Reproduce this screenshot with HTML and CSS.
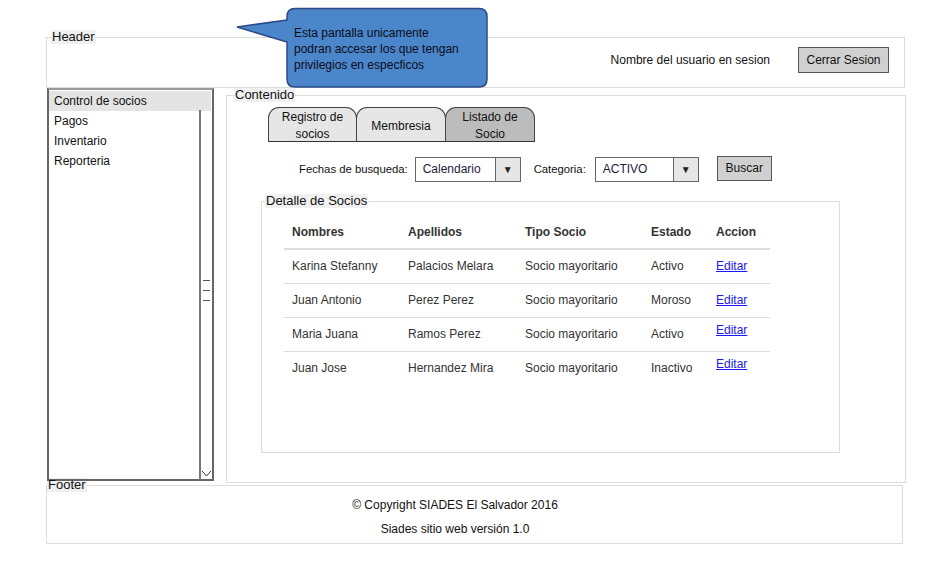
FILE: index.html
```html
<!DOCTYPE html>
<html lang="es">
<head>
    <meta charset="UTF-8">
    <title>SIADES - Listado de Socios</title>
    <link rel="stylesheet" href="styles.css">
</head>
<body>
    <div class="page">
        <fieldset class="box header">
            <legend>Header</legend>
            <div class="header-bar">
                <span class="user-name">Nombre del usuario en sesion</span>
                <button class="btn btn-logout">Cerrar Sesion</button>
            </div>
        </fieldset>

        <div class="main">
            <div class="sidebar">
                <ul class="menu">
                    <li class="active">Control de socios</li>
                    <li>Pagos</li>
                    <li>Inventario</li>
                    <li>Reporteria</li>
                </ul>
                <div class="scrollbar">
                    <svg class="grip" width="9" height="22" viewBox="0 0 9 22">
                        <path d="M1 1.5H8M1 11.5H8M1 21.5H8" stroke="#555" stroke-width="1"/>
                    </svg>
                    <svg class="chevron" width="11" height="7" viewBox="0 0 11 7">
                        <path d="M1 1L5.5 6L10 1" fill="none" stroke="#333" stroke-width="1"/>
                    </svg>
                </div>
            </div>

            <fieldset class="box content">
                <legend>Contenido</legend>
                <div class="tabs">
                    <div class="tab">Registro de<br>socios</div>
                    <div class="tab">Membresia</div>
                    <div class="tab selected">Listado de<br>Socio</div>
                </div>

                <div class="filters">
                    <span class="filter-label">Fechas de busqueda:</span>
                    <div class="select select-date">
                        <span class="select-value">Calendario</span>
                        <span class="select-arrow">&#9660;</span>
                    </div>
                    <span class="filter-label label-cat">Categoria:</span>
                    <div class="select select-cat">
                        <span class="select-value">ACTIVO</span>
                        <span class="select-arrow">&#9660;</span>
                    </div>
                    <button class="btn btn-search">Buscar</button>
                </div>

                <fieldset class="box detail">
                    <legend>Detalle de Socios</legend>
                    <table class="members">
                        <colgroup>
                            <col style="width:116px">
                            <col style="width:117px">
                            <col style="width:126px">
                            <col style="width:65px">
                            <col style="width:62px">
                        </colgroup>
                        <thead>
                            <tr>
                                <th>Nombres</th>
                                <th>Apellidos</th>
                                <th>Tipo Socio</th>
                                <th>Estado</th>
                                <th>Accion</th>
                            </tr>
                        </thead>
                        <tbody>
                            <tr>
                                <td>Karina Stefanny</td>
                                <td>Palacios Melara</td>
                                <td>Socio mayoritario</td>
                                <td>Activo</td>
                                <td><a href="#" class="edit">Editar</a></td>
                            </tr>
                            <tr>
                                <td>Juan Antonio</td>
                                <td>Perez Perez</td>
                                <td>Socio mayoritario</td>
                                <td>Moroso</td>
                                <td><a href="#" class="edit">Editar</a></td>
                            </tr>
                            <tr>
                                <td>Maria Juana</td>
                                <td>Ramos Perez</td>
                                <td>Socio mayoritario</td>
                                <td>Activo</td>
                                <td class="edit-cell"><a href="#" class="edit">Editar</a></td>
                            </tr>
                            <tr>
                                <td>Juan Jose</td>
                                <td>Hernandez Mira</td>
                                <td>Socio mayoritario</td>
                                <td>Inactivo</td>
                                <td class="edit-cell"><a href="#" class="edit">Editar</a></td>
                            </tr>
                        </tbody>
                    </table>
                </fieldset>
            </fieldset>
        </div>

        <fieldset class="box footer">
            <legend>Footer</legend>
            <div class="footer-text">
                <p>&copy; Copyright SIADES El Salvador 2016</p>
                <p>Siades sitio web versión 1.0</p>
            </div>
        </fieldset>

        <!-- nota del wireframe -->
        <div class="callout">
            <svg class="callout-shape" width="253" height="82" viewBox="0 0 253 82">
                <path d="M59 1.5H243Q251 1.5 251 9.5V72Q251 80 243 80H59Q51 80 51 72V35L1 20L51 13V9.5Q51 1.5 59 1.5Z"
                      fill="#4a86c9" stroke="#2c4a86" stroke-width="1.5"/>
            </svg>
            <p class="callout-text">Esta pantalla unicamente<br>podran accesar los que tengan<br>privilegios en especficos</p>
        </div>
    </div>
</body>
</html>
```

FILE: styles.css
```css
* {
    box-sizing: border-box;
}
body {
    margin: 0;
    font-family: 'Liberation Sans', Arial, sans-serif;
    font-size: 12px;
    color: #222;
    background: #fff;
}
.page {
    position: relative;
    width: 949px;
    height: 575px;
    padding-top: 30px;
}
.box {
    margin: 0;
    padding: 0;
    min-width: 0;
    border: 1px solid #dcdcdc;
}
.box legend {
    padding: 0 1px;
    margin-left: 4px;
    background: #f0f0f0;
    font-size: 13px;
    line-height: 14px;
    color: #111;
}
.header {
    margin-left: 46px;
    width: 859px;
}
.header-bar {
    display: flex;
    justify-content: flex-end;
    align-items: center;
    gap: 28px;
    padding: 3px 15px 14px 0;
}
.user-name {
    color: #111;
}
.btn {
    font-family: inherit;
    font-size: 12px;
    color: #111;
    background: #d0d0d0;
    border: 1px solid #555;
    border-radius: 0;
    padding: 0;
    cursor: pointer;
}
.btn-logout {
    width: 91px;
    height: 26px;
}
.main {
    display: flex;
    align-items: flex-start;
    margin-left: 47px;
    height: 395px;
}
.sidebar {
    display: flex;
    width: 167px;
    height: 393px;
    border: 2px solid #666;
    border-top-color: #999;
}
.menu {
    flex: 1;
    list-style: none;
    margin: 0;
    padding: 1px 0 0;
}
.menu li {
    height: 20px;
    line-height: 20px;
    padding-left: 5px;
    color: #111;
}
.menu li.active {
    background: #e4e4e4;
    margin-right: -12px;
}
.scrollbar {
    display: flex;
    flex-direction: column;
    align-items: center;
    width: 13px;
    margin-top: 20px;
    height: 371px;
    border-left: 2px solid #777;
}
.grip {
    margin-top: auto;
}
.chevron {
    margin-top: auto;
    margin-bottom: 4px;
}
.content {
    margin-left: 12px;
    width: 680px;
    height: 395px;
}
.content > legend {
    margin-left: 7px;
}
.tabs {
    display: flex;
    margin: 5px 0 0 41px;
}
.tab {
    display: flex;
    align-items: center;
    justify-content: center;
    width: 89px;
    height: 35px;
    padding-top: 3px;
    border: 1px solid #444;
    border-bottom-color: #333;
    border-radius: 11px 11px 0 0;
    background: #e6e6e6;
    text-align: center;
    line-height: 17px;
    color: #111;
}
.tab + .tab {
    margin-left: -1px;
    width: 90px;
}
.tab.selected {
    background: #bcbcbc;
}
.filters {
    display: flex;
    align-items: center;
    margin: 14px 0 0 72px;
    height: 26px;
}
.filter-label {
    color: #111;
    font-size: 11.3px;
}
.select {
    display: flex;
    height: 25px;
    border: 1px solid #666;
    background: #fff;
}
.select-date {
    width: 106px;
    margin-left: 7px;
}
.select-cat {
    width: 104px;
    margin-left: 9px;
}
.label-cat {
    margin-left: 13px;
}
.select-value {
    flex: 1;
    padding-left: 7px;
    line-height: 23px;
    color: #1c1c3a;
}
.select-arrow {
    display: flex;
    align-items: center;
    justify-content: center;
    width: 25px;
    border-left: 1px solid #666;
    background: #e6e6e6;
    font-size: 10px;
    color: #222;
}
.btn-search {
    width: 55px;
    height: 25px;
    margin-left: 18px;
    margin-top: -2px;
}
.detail {
    margin: 12px 0 0 34px;
    width: 579px;
    height: 259px;
}
.detail > legend {
    margin-left: 3px;
}
.members {
    margin: 9px 0 0 22px;
    width: 486px;
    border-collapse: collapse;
    table-layout: fixed;
    color: #333;
}
.members th,
.members td {
    padding: 0 8px;
    text-align: left;
    white-space: nowrap;
}
.members th {
    height: 32px;
    font-weight: bold;
    border-bottom: 2px solid #ddd;
    padding-bottom: 2px;
}
.members td {
    height: 34px;
}
.members tbody tr + tr td {
    border-top: 1px solid #ddd;
}
.members td.edit-cell {
    vertical-align: top;
    padding-top: 5px;
}
.edit {
    color: #1a1aee;
    text-decoration: underline;
}
.footer {
    margin: -5px 0 0 46px;
    width: 857px;
    padding: 1px 0 2px;
}
.footer > legend {
    margin-left: 0;
}
.footer-text {
    padding-right: 39px;
    text-align: center;
}
.footer-text p {
    margin: 0;
    line-height: 24px;
    color: #111;
}
.callout {
    position: absolute;
    left: 236px;
    top: 7px;
    width: 253px;
    height: 82px;
}
.callout-shape {
    display: block;
}
.callout-text {
    position: absolute;
    left: 58px;
    top: 18px;
    margin: 0;
    font-size: 12px;
    line-height: 16px;
    color: #0c0c1a;
}
```
